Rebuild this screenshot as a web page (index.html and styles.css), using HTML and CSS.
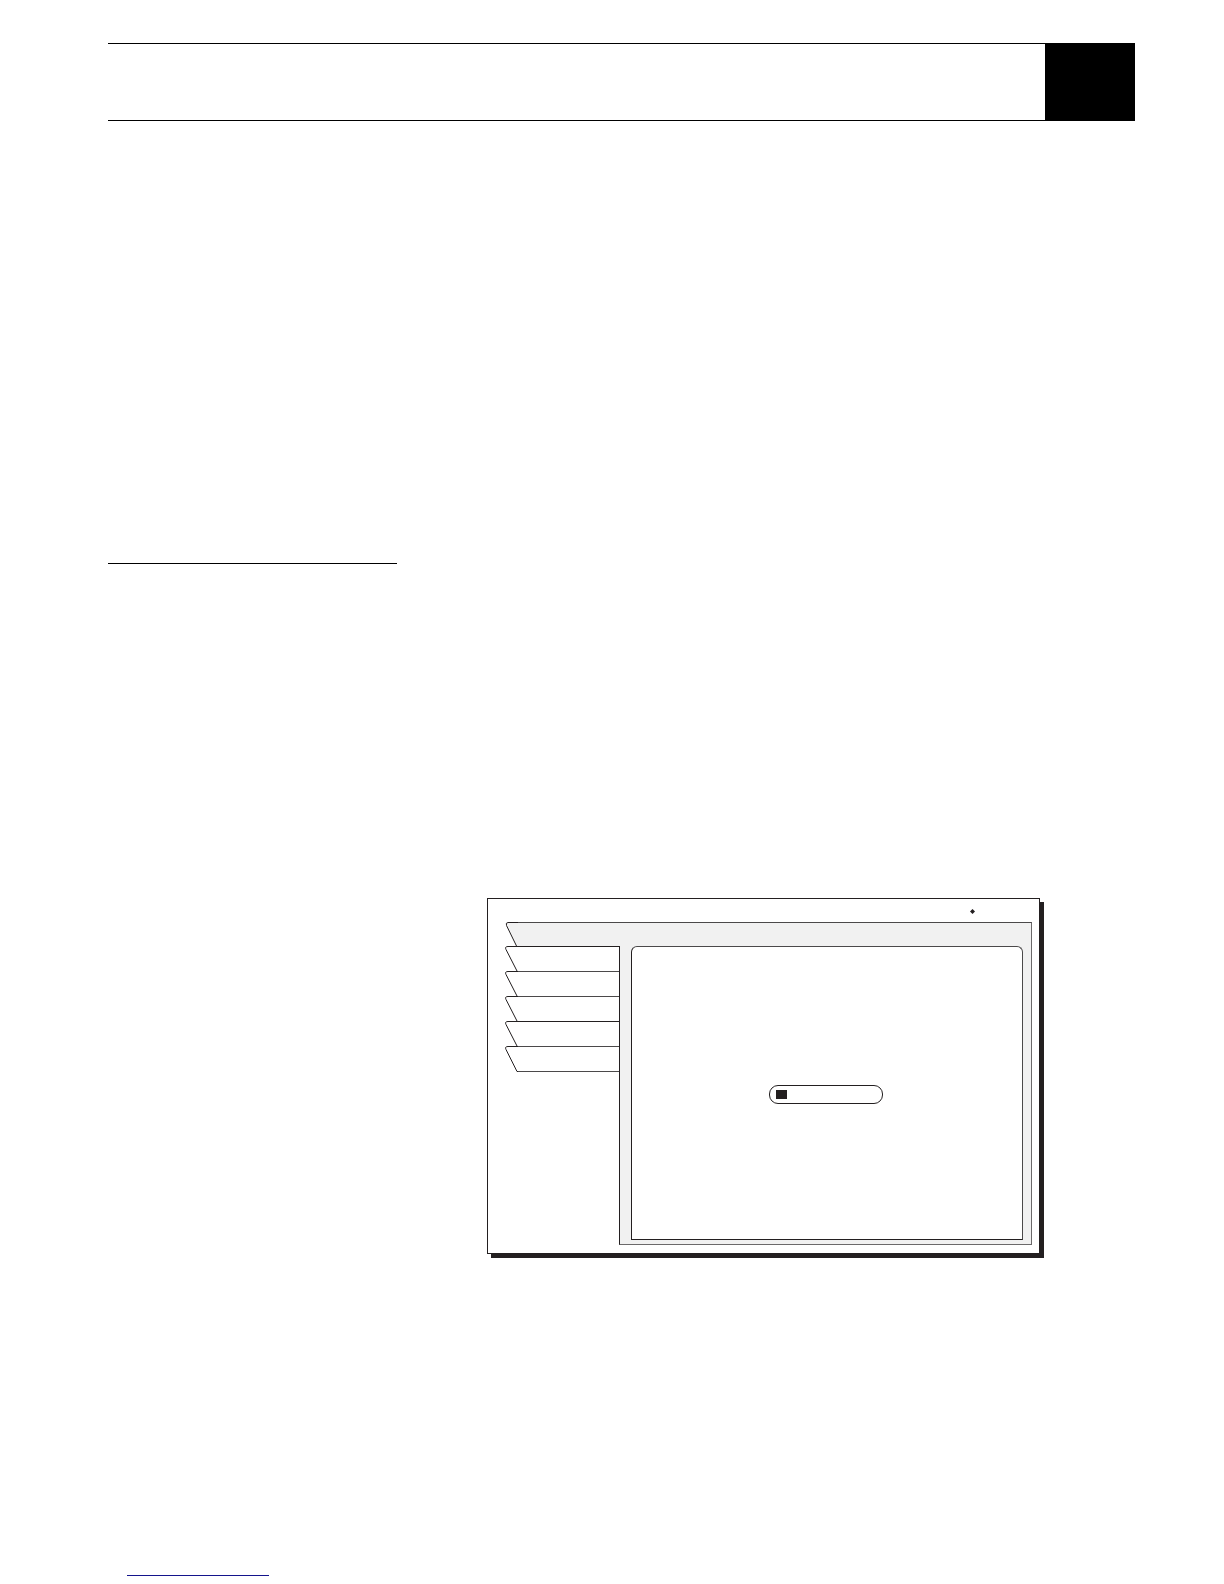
FILE: index.html
```
<!DOCTYPE html>
<html lang="en">
<head>
    <meta charset="UTF-8">
    <meta name="viewport" content="width=device-width, initial-scale=1.0">
    <title>Manual page</title>
    <link rel="stylesheet" href="styles.css">
</head>
<body>
    <header class="page-header">
        <div class="chapter-mark"></div>
    </header>
    <main class="page">
        <hr class="section-rule">
        <div class="window">
            <div class="status-bar">
                <svg class="diamond" viewBox="0 0 5 5"><path d="M2.5 0L5 2.5L2.5 5L0 2.5Z"/></svg>
            </div>
            <div class="panel-top">
                <svg class="slant" viewBox="0 0 13 25"><path class="fill" d="M13 .5H3Q.5 .5 1.5 3.5L12 25H13Z"/><path class="line" d="M13 .5H3Q.5 .5 1.5 3.5L12 25"/></svg>
                <div class="panel-title"></div>
            </div>
            <div class="panel-body">
                <nav class="tabs">
                    <button class="tab" aria-label="Tab 1">
                        <svg class="slant" viewBox="0 0 13 25"><path class="line" d="M13 .5H3Q-.5 .5 1 3.5L12 25"/></svg>
                        <span class="tab-face"></span>
                    </button>
                    <button class="tab" aria-label="Tab 2">
                        <svg class="slant" viewBox="0 0 13 25"><path class="line" d="M13 .5H3Q-.5 .5 1 3.5L12 25"/></svg>
                        <span class="tab-face"></span>
                    </button>
                    <button class="tab" aria-label="Tab 3">
                        <svg class="slant" viewBox="0 0 13 25"><path class="line" d="M13 .5H3Q-.5 .5 1 3.5L12 25"/></svg>
                        <span class="tab-face"></span>
                    </button>
                    <button class="tab" aria-label="Tab 4">
                        <svg class="slant" viewBox="0 0 13 25"><path class="line" d="M13 .5H3Q-.5 .5 1 3.5L12 25"/></svg>
                        <span class="tab-face"></span>
                    </button>
                    <button class="tab" aria-label="Tab 5">
                        <svg class="slant" viewBox="0 0 13 25"><path class="line" d="M13 .5H3Q-.5 .5 1 3.5L12 25.5H13"/></svg>
                        <span class="tab-face"></span>
                    </button>
                </nav>
                <div class="panel">
                    <div class="screen">
                        <progress class="progress" value="11" max="100" aria-label="Progress"></progress>
                    </div>
                </div>
            </div>
        </div>
    </main>
    <footer class="page-footer">
        <a class="footer-link" href="#" aria-label="Website"></a>
    </footer>
</body>
</html>
```
FILE: styles.css
```
* {
    box-sizing: border-box;
}
body {
    margin: 0;
    padding: 43px 89px 8px 108px;
    min-height: 100vh;
    display: flex;
    flex-direction: column;
    font-family: "Liberation Sans", Arial, sans-serif;
    background-color: white;
}
.page-header {
    display: flex;
    justify-content: flex-end;
    border-top: 1px solid black;
    border-bottom: 1px solid black;
}
.chapter-mark {
    width: 90px;
    height: 76px;
    background-color: black;
}
.page {
    flex: 1;
}
.section-rule {
    width: 289px;
    margin: 442px 0 334px;
    border: 0;
    border-top: 1px solid black;
}
.window {
    margin: 0 95px 0 379px;
    padding: 0 7px 8px 17px;
    border: 1px solid #231f20;
    background-color: white;
    box-shadow: 4px 4px 0 #231f20;
}
.status-bar {
    display: flex;
    align-items: center;
    justify-content: flex-end;
    height: 23px;
    padding: 1px 57px 0 0;
}
.diamond {
    width: 5px;
    height: 5px;
    fill: #231f20;
}
.slant {
    flex: none;
    display: block;
    width: 13px;
    height: 25px;
    overflow: visible;
}
.line {
    fill: none;
    stroke: #231f20;
}
.fill {
    fill: #f1f1f1;
}
.panel-top {
    display: flex;
    height: 24px;
}
.panel-title {
    flex: 1;
    border-top: 1px solid #4b494a;
    border-right: 1px solid #6b696a;
    background-color: #f1f1f1;
}
.panel-body {
    display: flex;
}
.tabs {
    width: 114px;
}
.tab {
    display: flex;
    width: 100%;
    height: 25px;
    padding: 0;
    border: 0;
    background: none;
}
.tab-face {
    flex: 1;
    height: 25px;
    border-top: 1px solid #4b494a;
    background-color: white;
}
.tab:first-child .tab-face,
.tab:nth-child(4) .tab-face {
    border-top-color: #231f20;
}
.tab:last-child {
    height: 26px;
}
.tab:last-child .tab-face {
    height: 26px;
    border-bottom: 1px solid #4b494a;
}
/* grey frame around the screen */
.panel {
    flex: 1;
    padding: 0 8px 4px 11px;
    border: 1px solid #6b696a;
    border-top: 0;
    border-left-color: #231f20;
    background-color: #f1f1f1;
}
.screen {
    display: flex;
    align-items: center;
    justify-content: center;
    height: 294px;
    padding: 2px 2px 0 0;
    border: 1px solid #231f20;
    border-top-color: #4b494a;
    border-right-color: #4b494a;
    border-radius: 6px 6px 0 0;
    background-color: white;
}
.progress {
    appearance: none;
    width: 114px;
    height: 19px;
    padding: 4px 6px;
    border: 1px solid #231f20;
    border-radius: 9px;
    background-color: white;
}
.progress::-webkit-progress-bar {
    background-color: white;
}
.progress::-webkit-progress-value {
    background-color: #231f20;
}
.page-footer {
    padding-left: 19px;
}
.footer-link {
    display: block;
    width: 142px;
    border-bottom: 1px solid #14148c;
}
```
